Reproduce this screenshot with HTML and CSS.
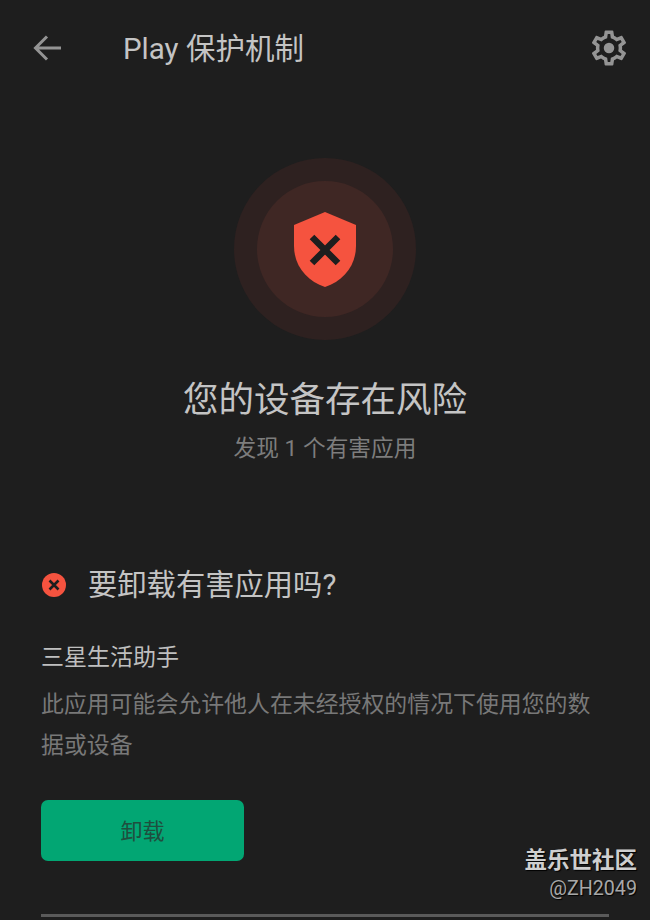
FILE: index.html
```html
<!DOCTYPE html>
<html>
<head>
  <meta charset="utf-8">
  <title>Play 保护机制</title>
  <link rel="stylesheet" href="styles.css">
</head>
<body>
  <div class="page">
    <div class="toolbar">
      <svg class="back" width="30" height="28" viewBox="0 0 30 28">
        <path d="M28 14H3M14 2.500L2.500 14L14 25.500" fill="none" stroke="#949494" stroke-width="3"/>
      </svg>
      <div class="title">Play 保护机制</div>
      <svg class="gear" width="42" height="42" viewBox="0 0 24 24">
        <path d="M19.430 12.980c.04-.32.07-.64.07-.98s-.03-.66-.07-.98l2.110-1.650c.19-.15.24-.42.12-.64l-2-3.460c-.12-.22-.39-.3-.61-.22l-2.490 1c-.52-.4-1.080-.73-1.690-.98l-.38-2.650C14.460 2.180 14.250 2 14 2h-4c-.25 0-.46.18-.49.42l-.38 2.650c-.61.25-1.170.59-1.690.98l-2.490-1c-.23-.09-.49 0-.61.22l-2 3.460c-.13.22-.07.49.12.64l2.110 1.650c-.04.32-.07.65-.07.98s.03.66.07.98l-2.110 1.650c-.19.15-.24.42-.12.64l2 3.460c.12.22.39.3.61.22l2.490-1c.52.4 1.080.73 1.690.98l.38 2.650c.03.24.24.42.49.42h4c.25 0 .46-.18.49-.42l.38-2.650c.61-.25 1.170-.59 1.690-.98l2.490 1c.23.09.49 0 .61-.22l2-3.460c.12-.22.07-.49-.12-.64l-2.110-1.650zM17.450 11.270c.04.31.05.52.05.73s-.02.43-.05.73l-.14 1.130.89.7 1.080.84-.7 1.210-1.270-.51-1.040-.42-.9.68c-.43.32-.84.56-1.250.73l-1.060.43-.16 1.130-.2 1.350h-1.400l-.19-1.350-.16-1.130-1.060-.43c-.43-.18-.83-.41-1.230-.71l-.91-.7-1.060.43-1.270.51-.7-1.210 1.080-.84.89-.7-.14-1.130c-.03-.31-.05-.54-.05-.74s.02-.43.05-.73l.14-1.130-.89-.7-1.080-.84.7-1.210 1.270.51 1.040.42.9-.68c.43-.32.84-.56 1.250-.73l1.060-.43.16-1.130.2-1.350h1.390l.19 1.350.16 1.130 1.060.43c.43.18.83.41 1.230.71l.91.7 1.060-.43 1.270-.51.7 1.210-1.070.85-.89.7.14 1.130z" fill="#949494"/>
        <circle cx="12" cy="12" r="3" fill="#949494"/>
      </svg>
    </div>

    <div class="status">
      <div class="ring-outer">
        <div class="ring-inner">
          <svg width="62" height="75" viewBox="0 0 62 75">
            <path d="M31 0L62 13V34C62 54 49 69 31 75C13 69 0 54 0 34V13Z" fill="#f5533f"/>
            <path d="M18 25L44 51M44 25L18 51" stroke="#1e1e1e" stroke-width="6.500"/>
          </svg>
        </div>
      </div>
      <h1 class="status-title">您的设备存在风险</h1>
      <div class="status-sub">发现 1 个有害应用</div>
    </div>

    <div class="section">
      <div class="section-head">
        <svg width="24" height="24" viewBox="0 0 24 24">
          <circle cx="12" cy="12" r="12" fill="#f5533f"/>
          <path d="M7.500 7.500L16.500 16.500M16.500 7.500L7.500 16.500" stroke="#1e1e1e" stroke-width="2.600"/>
        </svg>
        <h2 class="section-title">要卸载有害应用吗?</h2>
      </div>
      <div class="app-name">三星生活助手</div>
      <p class="app-desc">此应用可能会允许他人在未经授权的情况下使用您的数据或设备</p>
      <button class="button">卸载</button>
      <div class="divider"></div>
    </div>

    <div class="watermark">
      <div class="wm-name">盖乐世社区</div>
      <div class="wm-user">@ZH2049</div>
    </div>
  </div>
</body>
</html>
```

FILE: styles.css
```css
html, body {
  margin: 0;
  padding: 0;
}
body {
  font-family: "Roboto", "Noto Sans CJK SC", sans-serif;
  background-color: #1e1e1e;
}
.page {
  position: relative;
  width: 650px;
  height: 920px;
  overflow: hidden;
  background-color: #1e1e1e;
}
.toolbar {
  display: flex;
  align-items: center;
  height: 96px;
  padding: 0 20px 0 33px;
}
.back {
  flex: none;
}
.title {
  flex: 1;
  margin-left: 60px;
  padding-bottom: 4px;
  font-size: 29.500px;
  color: #c4c4c4;
}
.gear {
  flex: none;
}
.status {
  display: flex;
  flex-direction: column;
  align-items: center;
  padding-top: 62px;
}
.ring-outer {
  display: flex;
  align-items: center;
  justify-content: center;
  width: 182px;
  height: 182px;
  border-radius: 50%;
  background-color: #2e2120;
}
.ring-inner {
  display: flex;
  align-items: center;
  justify-content: center;
  width: 136px;
  height: 136px;
  border-radius: 50%;
  background-color: #3f2724;
}
.status-title {
  margin: 35px 0 0;
  font-size: 35.500px;
  font-weight: 400;
  line-height: 50px;
  color: #c4c4c4;
}
.status-sub {
  margin-top: 7px;
  font-size: 22.700px;
  line-height: 34px;
  color: #7d7d7d;
}
.section {
  padding: 0 41px;
  margin-top: 99px;
}
.section-head {
  display: flex;
  align-items: center;
  gap: 22px;
  padding-left: 1px;
}
.section-title {
  margin: 0;
  font-size: 29.300px;
  font-weight: 400;
  line-height: 40px;
  color: #c4c4c4;
}
.app-name {
  margin-top: 36px;
  font-size: 23px;
  line-height: 34px;
  color: #bfbfbf;
}
.app-desc {
  margin: 9px 0 0;
  font-size: 22.900px;
  line-height: 41px;
  color: #787878;
}
.button {
  display: block;
  width: 203px;
  height: 61px;
  margin-top: 34px;
  padding: 0 0 4px;
  border: none;
  border-radius: 7px;
  background-color: #02a673;
  color: #1f4f3e;
  font-family: inherit;
  font-size: 22px;
}
.divider {
  height: 3px;
  margin-top: 53px;
  background-color: #5a5a5a;
}
.watermark {
  position: absolute;
  right: 13px;
  top: 845px;
  text-align: right;
  text-shadow: 1px 1px 1px #000;
}
.wm-name {
  font-size: 22.500px;
  font-weight: 700;
  line-height: 30px;
  color: #cfcfcf;
}
.wm-user {
  font-size: 19.700px;
  line-height: 28px;
  color: #a8a8a8;
}
```
